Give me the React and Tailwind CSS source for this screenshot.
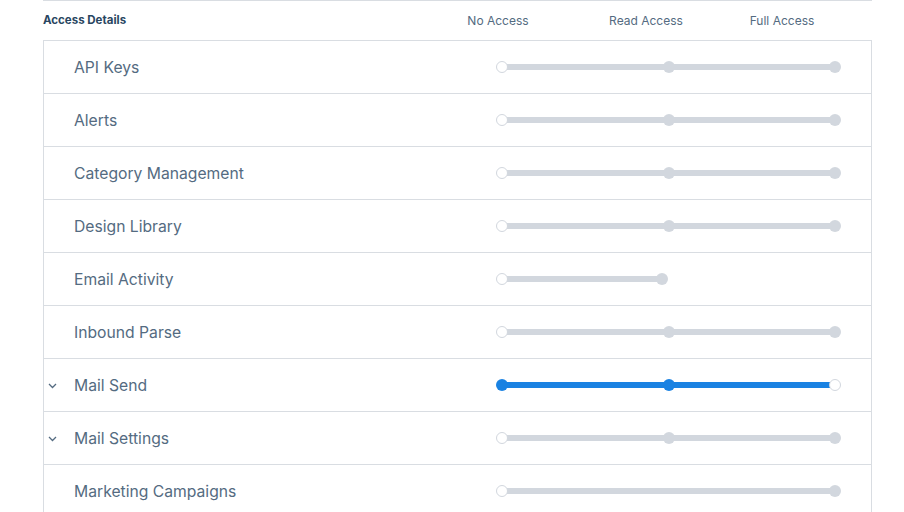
import React from "react";

const rows = [
  { name: "API Keys", type: 3 },
  { name: "Alerts", type: 3 },
  { name: "Category Management", type: 3 },
  { name: "Design Library", type: 3 },
  { name: "Email Activity", type: 2 },
  { name: "Inbound Parse", type: 3 },
  { name: "Mail Send", type: 3, chevron: true, active: true },
  { name: "Mail Settings", type: 3, chevron: true },
  { name: "Marketing Campaigns", type: 1 },
];

function Chevron() {
  return (
    <svg width="9" height="6" viewBox="0 0 9 6" className="block">
      <polyline points="1,1 4.5,4.5 8,1" fill="none" stroke="#546b81" strokeWidth="1.3" />
    </svg>
  );
}

function Slider({ type, active }) {
  const empty = "w-3 h-3 rounded-full bg-white border border-[#d2d7de] shrink-0 z-10";
  const gray = "w-3 h-3 rounded-full bg-[#d2d7de] shrink-0 z-10";
  const blue = "w-3 h-3 rounded-full bg-[#1a82e2] shrink-0 z-10";
  const track = active ? "h-[6px] bg-[#1a82e2] flex-1 -mx-px" : "h-[6px] bg-[#d2d7de] flex-1 -mx-px";
  if (active) {
    return (
      <div className="flex items-center w-[345px]">
        <div className={blue} />
        <div className={track} />
        <div className={blue} />
        <div className={track} />
        <div className={empty} />
      </div>
    );
  }
  if (type === 2) {
    return (
      <div className="flex items-center w-[172px]">
        <div className={empty} />
        <div className={track} />
        <div className={gray} />
      </div>
    );
  }
  if (type === 1) {
    return (
      <div className="flex items-center w-[345px]">
        <div className={empty} />
        <div className={track} />
        <div className={gray} />
      </div>
    );
  }
  return (
    <div className="flex items-center w-[345px]">
      <div className={empty} />
      <div className={track} />
      <div className={gray} />
      <div className={track} />
      <div className={gray} />
    </div>
  );
}

export default function App() {
  return (
    <div className="w-[904px] h-[512px] bg-white overflow-hidden" style={{ fontFamily: "Inter, 'Noto Sans', sans-serif" }}>
      <div className="ml-[43px] w-[829px]">
        <div className="h-[40px] border-t border-[#d9dde2] flex items-center">
          <div className="w-[405px] text-[11.5px] font-bold text-[#294661]">Access Details</div>
          <div className="w-[100px] text-center text-[12px] text-[#546b81]">No Access</div>
          <div className="ml-[48px] w-[100px] text-center text-[12px] text-[#546b81]">Read Access</div>
          <div className="ml-[36px] w-[100px] text-center text-[12px] text-[#546b81]">Full Access</div>
        </div>
        <div className="border border-[#d9dde2]">
          {rows.map((r) => (
            <div key={r.name} className="h-[53px] border-b border-[#d9dde2] flex items-center">
              <div className="w-[30px] flex justify-start pl-[4px] pt-[1px]">
                {r.chevron ? <Chevron /> : null}
              </div>
              <div className="w-[422px] text-[15.7px] text-[#546b81] pt-[2px]">{r.name}</div>
              <Slider type={r.type} active={r.active} />
            </div>
          ))}
        </div>
      </div>
    </div>
  );
}
